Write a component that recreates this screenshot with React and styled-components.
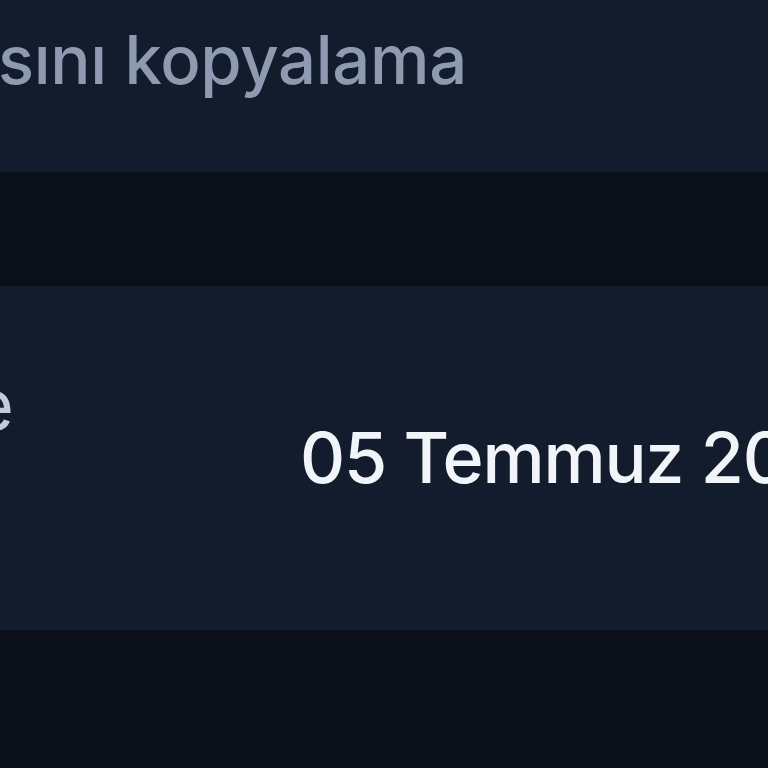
import styled, { createGlobalStyle } from "styled-components"

const GlobalStyle = createGlobalStyle`
  html, body {
    margin: 0;
    padding: 0;
    background: #0b0f19;
    font-family: Inter, "Noto Sans", sans-serif;
    overflow: hidden;
  }
`

const Page = styled.div`
  width: 768px;
  height: 768px;
  display: flex;
  flex-direction: column;
  overflow: hidden;
  background: #0b0f19;
`

const ActionRow = styled.div`
  height: 172px;
  flex-shrink: 0;
  background: #131c2d;
  box-sizing: border-box;
  padding-top: 19px;
  display: flex;
`

const ActionText = styled.div`
  width: 467px;
  display: flex;
  justify-content: flex-end;
  white-space: nowrap;
  font-size: 67px;
  line-height: 1.21;
  color: #8e9ab0;
  font-weight: 500;
  letter-spacing: -0.3px;
`

const Spacer = styled.div`
  height: 114px;
  flex-shrink: 0;
`

const InfoRow = styled.div`
  height: 344px;
  flex-shrink: 0;
  background: #131c2d;
  display: flex;
  align-items: center;
`

const Label = styled.div`
  width: 13px;
  flex-shrink: 0;
  display: flex;
  flex-direction: column;
  align-items: flex-end;
  white-space: nowrap;
  font-size: 71px;
  line-height: 1.21;
  color: #c3cbd8;
  letter-spacing: -1px;
  margin-top: -106px;
`

const Value = styled.div`
  margin-left: 287px;
  white-space: nowrap;
  font-size: 70px;
  font-weight: 500;
  line-height: 1.21;
  color: #f1f4f9;
  letter-spacing: -1.2px;
`

const App = () => {
  return (
    <Page>
      <GlobalStyle />
      <ActionRow>
        <ActionText>Bağlantısını kopyalama</ActionText>
      </ActionRow>
      <Spacer />
      <InfoRow>
        <Label>
          <span>Son güncelleme</span>
        </Label>
        <Value>05 Temmuz 2024</Value>
      </InfoRow>
    </Page>
  )
}

export default App
